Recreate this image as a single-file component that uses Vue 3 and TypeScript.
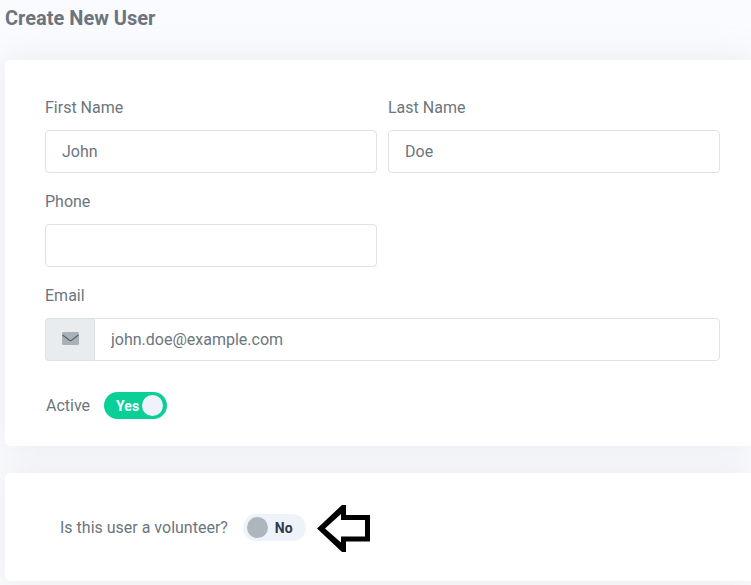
<script setup lang="ts">
import { reactive } from 'vue'

interface NewUser {
  firstName: string
  lastName: string
  phone: string
  email: string
  active: boolean
  volunteer: boolean
}

const user = reactive<NewUser>({
  firstName: 'John',
  lastName: 'Doe',
  phone: '',
  email: 'john.doe@example.com',
  active: true,
  volunteer: false,
})
</script>

<template>
  <main class="page">
    <h1 class="title">Create New User</h1>
    <form class="cards" @submit.prevent>
      <section class="card details">
        <div class="fields">
          <div class="field">
            <label for="first-name">First Name</label>
            <input id="first-name" v-model="user.firstName" class="control" type="text" />
          </div>
          <div class="field">
            <label for="last-name">Last Name</label>
            <input id="last-name" v-model="user.lastName" class="control" type="text" />
          </div>
          <div class="field phone">
            <label for="phone">Phone</label>
            <input id="phone" v-model="user.phone" class="control" type="tel" />
          </div>
          <div class="field wide">
            <label for="email">Email</label>
            <div class="group">
              <span class="addon">
                <svg width="17" height="13" viewBox="0 0 17 13" aria-hidden="true">
                  <rect width="17" height="13" rx="1.500" fill="#a9b1b8" />
                  <path d="M0.500 3 L7.500 8.300 Q8.500 9 9.500 8.300 L16.500 3" fill="none" stroke="#59636c" stroke-width="1.200" />
                </svg>
              </span>
              <input id="email" v-model="user.email" class="control" type="email" />
            </div>
          </div>
        </div>
        <div class="switch-row active-row">
          <label for="active">Active</label>
          <label class="switch" :class="{ on: user.active }">
            <input id="active" v-model="user.active" type="checkbox" />
            <span class="state">{{ user.active ? 'Yes' : 'No' }}</span>
            <span class="knob"></span>
          </label>
        </div>
      </section>

      <section class="card volunteer">
        <div class="switch-row">
          <label for="volunteer">Is this user a volunteer?</label>
          <label class="switch" :class="{ on: user.volunteer }">
            <input id="volunteer" v-model="user.volunteer" type="checkbox" />
            <span class="state">{{ user.volunteer ? 'Yes' : 'No' }}</span>
            <span class="knob"></span>
          </label>
          <svg class="arrow" width="54" height="48" viewBox="0 0 54 48" aria-hidden="true">
            <path d="M3 24.500 L26.500 4 V13.500 H50.500 V35 H26.500 V45 Z" fill="#fff" />
            <path d="M0 24.500 L25 1 L29 1 V11 H53 V37.500 H29 V48 H25 Z M8 24.500 L24 38.500 V32.500 H48 V16 H24 V10 Z" fill="#000" fill-rule="evenodd" />
          </svg>
        </div>
      </section>
    </form>
  </main>
</template>

<style>
body {
  background: #fafbfe;
}
</style>

<style scoped>
.page {
  box-sizing: border-box;
  padding: 4px 0 4px 5px;
  overflow: hidden;
  color: #6c757d;
  font: 16px/24px Roboto, sans-serif;
}

.title {
  margin: 0 0 28px;
  font-size: 20px;
  line-height: 28px;
  font-weight: 700;
}

.cards {
  display: grid;
  gap: 27px;
}

.card {
  background: #fff;
  border-radius: 5px 0 0 5px;
  box-shadow: 0 0 35px rgba(154, 161, 171, 0.18);
}

.details {
  padding: 36px 31px 27px 40px;
}

.volunteer {
  padding: 41px 31px 40px 55px;
}

.fields {
  display: grid;
  grid-template-columns: 1fr 1fr;
  gap: 17px 11px;
}

.field {
  display: flex;
  flex-direction: column;
  gap: 10px;
  min-width: 0;
}

.phone {
  grid-column: 1;
}

.wide {
  grid-column: 1 / -1;
}

.control {
  box-sizing: border-box;
  width: 100%;
  min-width: 0;
  height: 43px;
  padding: 0 16px;
  border: 1px solid #dee2e6;
  border-radius: 4px;
  background: #fff;
  color: inherit;
  font: inherit;
}

.control:focus-visible {
  outline: 2px solid #0acf97;
}

.group {
  display: flex;
}

.addon {
  box-sizing: border-box;
  display: flex;
  flex: none;
  align-items: center;
  justify-content: center;
  width: 50px;
  padding-bottom: 3px;
  border: 1px solid #dee2e6;
  border-right: 0;
  border-radius: 4px 0 0 4px;
  background: #e9ecef;
}

.group .control {
  border-radius: 0 4px 4px 0;
  margin-left: -1px;
}

.switch-row {
  display: flex;
  align-items: center;
  gap: 14px;
  height: 27px;
}

.volunteer .switch-row {
  gap: 15px;
}

.active-row {
  margin-top: 31px;
  padding-left: 1px;
}

.switch {
  box-sizing: border-box;
  display: flex;
  flex-direction: row-reverse;
  align-items: center;
  justify-content: flex-end;
  gap: 7px;
  width: 63px;
  height: 27px;
  padding: 0 4px;
  border-radius: 14px;
  background: #eff2fb;
  color: #313a46;
  font-size: 14px;
  font-weight: 700;
  cursor: pointer;
}

.switch.on {
  flex-direction: row;
  justify-content: flex-end;
  gap: 3px;
  background: #0acf97;
  color: #fff;
}

.switch input {
  position: absolute;
  opacity: 0;
  pointer-events: none;
}

.switch:focus-within {
  outline: 2px solid #98a6ad;
}

.knob {
  width: 21px;
  height: 21px;
  border-radius: 50%;
  background: #adb5bd;
}

.switch.on .knob {
  background: #eff2fb;
}

.arrow {
  flex: none;
  margin-left: -4px;
}
</style>
